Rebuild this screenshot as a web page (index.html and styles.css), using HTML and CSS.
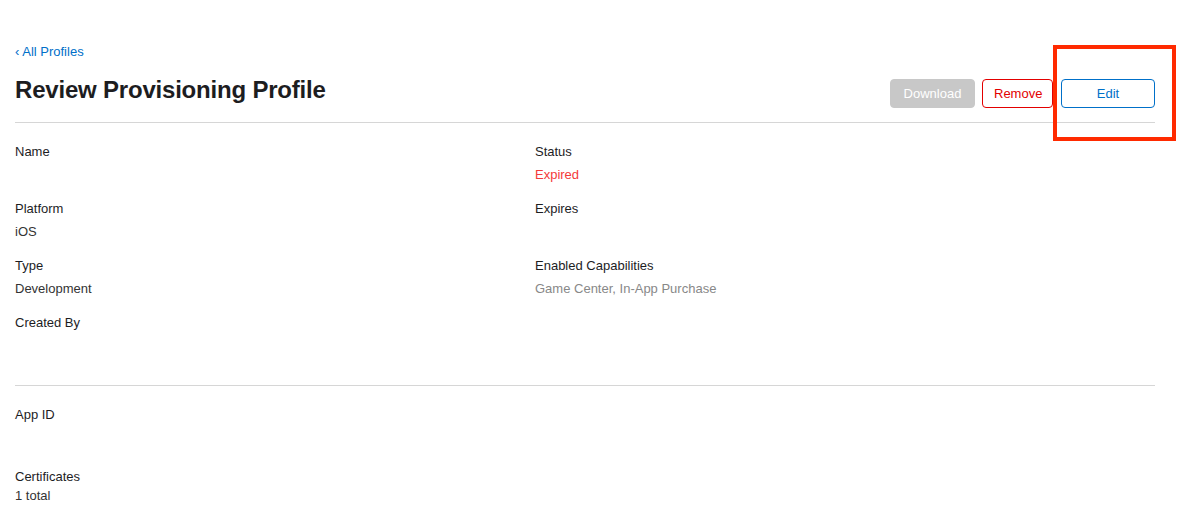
FILE: index.html
```html
<!DOCTYPE html>
<html lang="en">
<head>
    <meta charset="UTF-8">
    <meta name="viewport" content="width=device-width, initial-scale=1.0">
    <title>Review Provisioning Profile</title>
    <link rel="stylesheet" href="styles.css">
</head>
<body>
    <div class="page">
        <a class="back-link" href="#">&lsaquo; All Profiles</a>
        <div class="header">
            <h1>Review Provisioning Profile</h1>
            <div class="actions">
                <button class="btn btn-disabled" disabled>Download</button>
                <button class="btn btn-remove">Remove</button>
                <button class="btn btn-edit">Edit</button>
            </div>
        </div>

        <div class="section details">
            <div class="column">
                <div class="field">
                    <div class="label">Name</div>
                    <div class="value"></div>
                </div>
                <div class="field">
                    <div class="label">Platform</div>
                    <div class="value">iOS</div>
                </div>
                <div class="field">
                    <div class="label">Type</div>
                    <div class="value">Development</div>
                </div>
                <div class="field">
                    <div class="label">Created By</div>
                    <div class="value"></div>
                </div>
            </div>
            <div class="column">
                <div class="field">
                    <div class="label">Status</div>
                    <div class="value expired">Expired</div>
                </div>
                <div class="field">
                    <div class="label">Expires</div>
                    <div class="value"></div>
                </div>
                <div class="field">
                    <div class="label">Enabled Capabilities</div>
                    <div class="value muted">Game Center, In-App Purchase</div>
                </div>
            </div>
        </div>

        <div class="section bottom">
            <div class="field">
                <div class="label">App ID</div>
                <div class="value"></div>
            </div>
            <div class="field tight">
                <div class="label">Certificates</div>
                <div class="value">1 total</div>
            </div>
        </div>
    </div>
    <div class="highlight"></div>
</body>
</html>
```

FILE: styles.css
```css
body {
    margin: 0;
    font-family: 'Liberation Sans', Arial, sans-serif;
    font-size: 13px;
    color: #333;
    background-color: #fff;
}
.page {
    width: 1140px;
    padding: 43px 0 0 15px;
}
.back-link {
    display: block;
    color: #0070c9;
    text-decoration: none;
    line-height: 18px;
}
.header {
    display: flex;
    justify-content: space-between;
    align-items: center;
    margin-top: 11px;
    padding-bottom: 14px;
    border-bottom: 1px solid #d6d6d6;
}
h1 {
    margin: 0;
    font-size: 24px;
    line-height: 30px;
    font-weight: bold;
    color: #1d1d1f;
    letter-spacing: -0.2px;
}
.actions {
    display: flex;
    gap: 7px;
    margin-top: 7px;
}
.btn {
    height: 29px;
    padding: 0 11px;
    font-family: inherit;
    font-size: 13px;
    border-radius: 4px;
    background-color: #fff;
    cursor: pointer;
}
.btn-disabled {
    background-color: #c8c8c8;
    border: 1px solid #c8c8c8;
    color: #fff;
    width: 85px;
}
.btn-remove {
    border: 1px solid #e30000;
    color: #e30000;
    width: 71px;
}
.btn-edit {
    border: 1px solid #0070c9;
    color: #0070c9;
    width: 94px;
    margin-left: 1px;
}
.section {
    padding-top: 20px;
}
.details {
    display: flex;
    padding-bottom: 14px;
    border-bottom: 1px solid #d6d6d6;
}
.column {
    width: 520px;
}
.field {
    margin-bottom: 16px;
}
.label {
    line-height: 18px;
    color: #1d1d1f;
    margin-bottom: 5px;
}
.value {
    line-height: 18px;
    min-height: 18px;
}
.expired {
    color: #f43a3a;
}
.muted {
    color: #888;
}
.bottom .field {
    margin-bottom: 21px;
}
.bottom .tight .label {
    margin-bottom: 1px;
}
.highlight {
    position: absolute;
    left: 1053px;
    top: 45px;
    width: 115px;
    height: 88px;
    border: 4px solid #ff2a00;
}
```
